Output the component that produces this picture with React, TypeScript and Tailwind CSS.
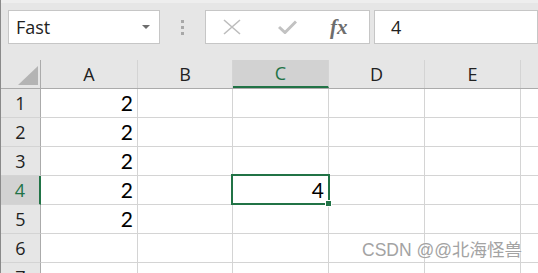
import React from "react";

const cols = ["A", "B", "C", "D", "E", ""];
const colW = ["w-[97px]", "w-[95px]", "w-[96px]", "w-[96px]", "w-[96px]", "w-[40px]"];
const rows = [1, 2, 3, 4, 5, 6, 7];
const data: Record<string, string> = { "1A": "2", "2A": "2", "3A": "2", "4A": "2", "5A": "2", "4C": "4" };

export default function App() {
  const ui = { fontFamily: '"Open Sans", "Noto Sans", sans-serif' };
  const cell = { fontFamily: 'Lato, "Liberation Sans", sans-serif' };
  return (
    <div className="w-[538px] h-[273px] overflow-hidden bg-white border-l border-[#8a8a8a] relative">
      {/* toolbar */}
      <div className="h-[60px] bg-[#e6e6e6] border-t-[3px] border-[#eeeeee] flex items-start pt-[7px]">
        <div className="ml-[7px] w-[152px] h-[34px] bg-white border border-[#c6c6c6] flex items-center justify-between pl-[7px] pr-[9px]">
          <span className="text-[18px] text-[#222] leading-none" style={ui}>Fast</span>
          <svg width="8" height="5" viewBox="0 0 8 5"><path d="M0 0 L8 0 L4 4 Z" fill="#6d6d6d" /></svg>
        </div>
        <div className="w-[45px] h-[34px] flex flex-col items-center justify-center gap-[3px]">
          <div className="w-[3px] h-[3px] bg-[#a8a8a8]" />
          <div className="w-[3px] h-[3px] bg-[#a8a8a8]" />
          <div className="w-[3px] h-[3px] bg-[#a8a8a8]" />
        </div>
        <div className="w-[165px] h-[34px] bg-white border border-[#c6c6c6] flex items-center">
          <svg className="ml-[17px]" width="18" height="16" viewBox="0 0 18 16">
            <path d="M1 1 L17 15 M17 1 L1 15" stroke="#bdbdbd" strokeWidth="1.6" fill="none" />
          </svg>
          <svg className="ml-[37px]" width="19" height="14" viewBox="0 0 19 14">
            <path d="M1 7 L7 12.5 L18 1.5" stroke="#c2c2c2" strokeWidth="3" fill="none" />
          </svg>
          <span className="ml-[33px] text-[21px] italic font-semibold text-[#6d6d6d] leading-none" style={{ fontFamily: '"Liberation Serif", "DejaVu Serif", serif' }}>fx</span>
        </div>
        <div className="ml-[4px] flex-1 h-[34px] bg-white border border-[#c6c6c6] flex items-center pl-[16px]">
          <span className="text-[18px] text-[#222] leading-none" style={ui}>4</span>
        </div>
      </div>

      {/* grid */}
      <div className="relative">
        <div className="flex h-[29px] border-b border-[#ababab] bg-[#e6e6e6]">
          <div className="w-[40px] shrink-0 border-r border-[#ababab] relative">
            <svg className="absolute left-[17px] top-[6px]" width="20" height="19" viewBox="0 0 20 19"><path d="M20 0 L20 19 L0 19 Z" fill="#b4b4b4" /></svg>
          </div>
          {cols.map((c, i) => (
            <div
              key={i}
              className={`${colW[i]} shrink-0 border-r border-[#d4d4d4] flex items-center justify-center text-[18px] ${c === "C" ? "bg-[#d2d2d2] text-[#217346] border-b-2 border-b-[#217346]" : "text-[#222]"}`}
              style={ui}
            >
              {c}
            </div>
          ))}
        </div>
        {rows.map((r) => (
          <div key={r} className="flex h-[29px]">
            <div
              className={`w-[40px] shrink-0 border-b border-[#d4d4d4] flex items-center justify-center text-[18px] ${r === 4 ? "bg-[#d2d2d2] text-[#217346] border-r-2 border-r-[#217346]" : "bg-[#e6e6e6] text-[#222] border-r border-r-[#ababab]"}`}
              style={ui}
            >
              {r}
            </div>
            {cols.map((c, i) => (
              <div
                key={i}
                className={`${colW[i]} shrink-0 border-r border-b border-[#d4d4d4] flex items-center justify-end pr-[4px] text-[21px] text-black`}
                style={cell}
              >
                {data[`${r}${c}`] ?? ""}
              </div>
            ))}
          </div>
        ))}
        {/* selection */}
        <div className="absolute left-[230px] top-[114px] w-[99px] h-[31px] border-2 border-[#217346]" />
        <div className="absolute left-[324px] top-[140px] w-[7px] h-[7px] bg-[#217346] border border-white" />
      </div>

      {/* watermark */}
      <div
        className="absolute left-[361px] top-[242px] text-[17.5px] text-[#a3a3a3] leading-none"
        style={{ fontFamily: '"Liberation Sans", "Noto Sans CJK SC", sans-serif', textShadow: "0 0 2px #fff" }}
      >
        CSDN @@北海怪兽
      </div>
    </div>
  );
}
